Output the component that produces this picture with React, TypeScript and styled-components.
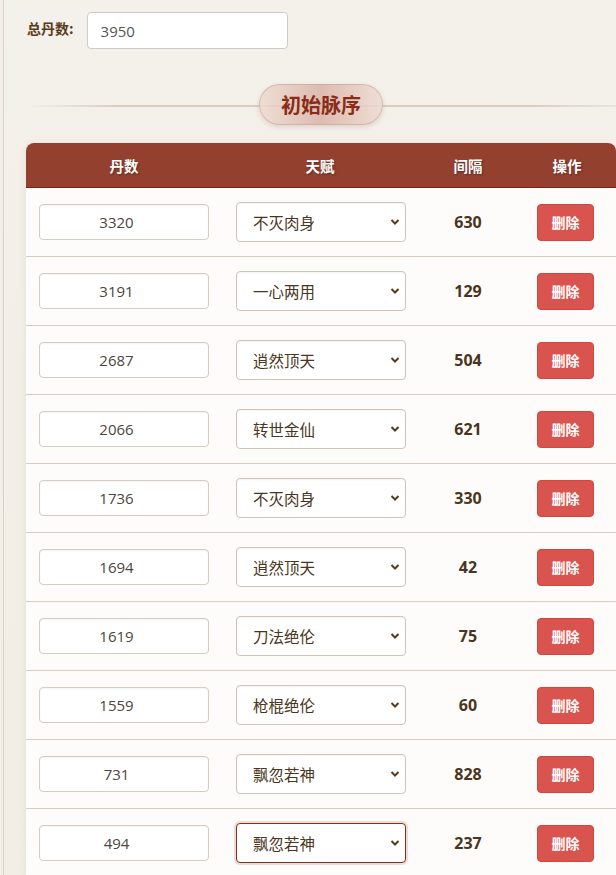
import React, { useState } from "react";
import styled, { createGlobalStyle } from "styled-components";

const GlobalStyle = createGlobalStyle`
  html, body {
    margin: 0;
    padding: 0;
    background: #f3efe8;
  }
  body {
    font-family: "Open Sans", "Noto Sans CJK SC", sans-serif;
    color: #4a3520;
  }
  * { box-sizing: border-box; }
`;

const Page = styled.div`
  margin-left: 3px;
  border-left: 1px solid #dbd3c7;
  min-height: 875px;
  padding: 12px 0 0 22px;
  background: linear-gradient(180deg, #f4f0ea 0%, #f2eee5 100%);
`;

const TotalRow = styled.div`
  display: flex;
  align-items: center;
  gap: 13px;
`;

const TotalLabel = styled.label`
  font-family: "Noto Sans CJK SC", sans-serif;
  font-weight: 700;
  font-size: 14px;
  color: #5a3a1c;
  padding-left: 1px;
  margin-top: -5px;
`;

const TotalInput = styled.input`
  width: 201px;
  height: 37px;
  border: 1px solid #cfcac4;
  border-radius: 4px;
  background: #fff;
  padding: 0 13px;
  font-family: "Open Sans", sans-serif;
  font-size: 15px;
  color: #555;
  outline: none;
`;

const SectionHead = styled.div`
  position: relative;
  display: flex;
  justify-content: center;
  align-items: center;
  height: 41px;
  margin: 35px 0 18px 0;
  &::before {
    content: "";
    position: absolute;
    left: 4px;
    right: 0;
    top: 50%;
    height: 2px;
    background: linear-gradient(90deg, rgba(215, 200, 185, 0) 0%, #dacdbf 15%, #dacdbf 85%, rgba(215, 200, 185, 0.3) 100%);
  }
`;

const Pill = styled.div`
  position: relative;
  height: 41px;
  padding: 0 21px;
  margin-left: 0;
  border-radius: 21px;
  border: 1px solid rgba(190, 160, 145, 0.55);
  background: linear-gradient(90deg, rgba(236, 218, 208, 0.85) 0%, rgba(217, 178, 167, 0.85) 50%, rgba(236, 218, 208, 0.85) 100%);
  box-shadow: 0 2px 5px rgba(120, 80, 60, 0.18);
  display: flex;
  align-items: center;
  font-family: "Noto Sans CJK SC", sans-serif;
  font-weight: 700;
  font-size: 20px;
  color: #8a2c18;
`;

const Table = styled.div`
  width: 590px;
  border-radius: 8px 8px 0 0;
  overflow: hidden;
  background: #fdfcfa;
  box-shadow: 0 2px 8px rgba(90, 60, 30, 0.08);
`;

const Grid = styled.div`
  display: grid;
  grid-template-columns: 196px 196px 100px 98px;
  align-items: center;
`;

const HeaderRow = styled(Grid)`
  height: 45px;
  background: #94402f;
  border-bottom: 1px solid #7a2312;
`;

const HeadCell = styled.div`
  text-align: center;
  font-family: "Noto Sans CJK SC", sans-serif;
  font-weight: 700;
  font-size: 14.5px;
  color: #fff;
  text-shadow: 1px 1px 2px rgba(0, 0, 0, 0.35);
`;

const BodyRow = styled(Grid)`
  height: 69px;
  border-bottom: 1px solid #d7ccbf;
`;

const Cell = styled.div`
  display: flex;
  justify-content: center;
  align-items: center;
`;

const NumInput = styled.input`
  width: 170px;
  height: 36px;
  margin-left: -1px;
  padding: 0 16px 0 2px;
  border: 1px solid #d6cbbf;
  border-radius: 4px;
  background: #fff;
  box-shadow: inset 0 1px 2px rgba(0, 0, 0, 0.05);
  text-align: center;
  font-family: "Open Sans", sans-serif;
  font-size: 15px;
  color: #4d4540;
  outline: none;
`;

const SelectWrap = styled.div`
  position: relative;
  width: 170px;
  height: 40px;
  margin-left: 2px;
`;

const Select = styled.select<{ $focused?: boolean }>`
  appearance: none;
  -webkit-appearance: none;
  width: 100%;
  height: 100%;
  border: 1px solid ${(p) => (p.$focused ? "#8a2c18" : "#cfc4b7")};
  border-radius: 4px;
  background: #fff;
  box-shadow: ${(p) =>
    p.$focused ? "0 0 0 2px rgba(160, 80, 60, 0.18)" : "inset 0 1px 2px rgba(0,0,0,0.05)"};
  padding: 0 24px 0 16px;
  font-family: "Noto Sans CJK SC", sans-serif;
  font-size: 15.5px;
  color: #4a3520;
  outline: none;
`;

const Chevron = styled.svg`
  position: absolute;
  right: 6px;
  top: 50%;
  width: 10px;
  height: 8px;
  margin-top: -4px;
  pointer-events: none;
`;

const Interval = styled.span`
  font-family: "Open Sans", sans-serif;
  font-weight: 700;
  font-size: 16px;
  color: #4a3520;
`;

const DeleteButton = styled.button`
  width: 57px;
  height: 37px;
  margin-left: -3px;
  border: 1px solid #d2463f;
  border-radius: 4px;
  background: #d9534f;
  color: #fff;
  font-family: "Noto Sans CJK SC", sans-serif;
  font-weight: 700;
  font-size: 14px;
  cursor: pointer;
`;

const talents = [
  "不灭肉身",
  "一心两用",
  "逍然顶天",
  "转世金仙",
  "刀法绝伦",
  "枪棍绝伦",
  "飘忽若神",
];

type Entry = { dan: string; talent: string; gap: number };

const initial: Entry[] = [
  { dan: "3320", talent: "不灭肉身", gap: 630 },
  { dan: "3191", talent: "一心两用", gap: 129 },
  { dan: "2687", talent: "逍然顶天", gap: 504 },
  { dan: "2066", talent: "转世金仙", gap: 621 },
  { dan: "1736", talent: "不灭肉身", gap: 330 },
  { dan: "1694", talent: "逍然顶天", gap: 42 },
  { dan: "1619", talent: "刀法绝伦", gap: 75 },
  { dan: "1559", talent: "枪棍绝伦", gap: 60 },
  { dan: "731", talent: "飘忽若神", gap: 828 },
  { dan: "494", talent: "飘忽若神", gap: 237 },
];

export default function App() {
  const [total, setTotal] = useState("3950");
  const [rows, setRows] = useState<Entry[]>(initial);

  const update = (i: number, patch: Partial<Entry>) =>
    setRows((r) => r.map((e, j) => (j === i ? { ...e, ...patch } : e)));

  return (
    <>
      <GlobalStyle />
      <Page>
        <TotalRow>
          <TotalLabel>总丹数:</TotalLabel>
          <TotalInput value={total} onChange={(e) => setTotal(e.target.value)} />
        </TotalRow>

        <SectionHead>
          <Pill>初始脉序</Pill>
        </SectionHead>

        <Table>
          <HeaderRow>
            <HeadCell>丹数</HeadCell>
            <HeadCell>天赋</HeadCell>
            <HeadCell>间隔</HeadCell>
            <HeadCell>操作</HeadCell>
          </HeaderRow>
          {rows.map((row, i) => (
            <BodyRow key={i}>
              <Cell>
                <NumInput value={row.dan} onChange={(e) => update(i, { dan: e.target.value })} />
              </Cell>
              <Cell>
                <SelectWrap>
                  <Select
                    $focused={i === rows.length - 1}
                    value={row.talent}
                    onChange={(e) => update(i, { talent: e.target.value })}
                  >
                    {talents.map((t) => (
                      <option key={t} value={t}>
                        {t}
                      </option>
                    ))}
                  </Select>
                  <Chevron viewBox="0 0 10 8">
                    <path d="M1.5 2 L5 5.5 L8.5 2" fill="none" stroke="#5a3a1c" strokeWidth="2" />
                  </Chevron>
                </SelectWrap>
              </Cell>
              <Cell>
                <Interval>{row.gap}</Interval>
              </Cell>
              <Cell>
                <DeleteButton onClick={() => setRows((r) => r.filter((_, j) => j !== i))}>
                  删除
                </DeleteButton>
              </Cell>
            </BodyRow>
          ))}
        </Table>
      </Page>
    </>
  );
}
